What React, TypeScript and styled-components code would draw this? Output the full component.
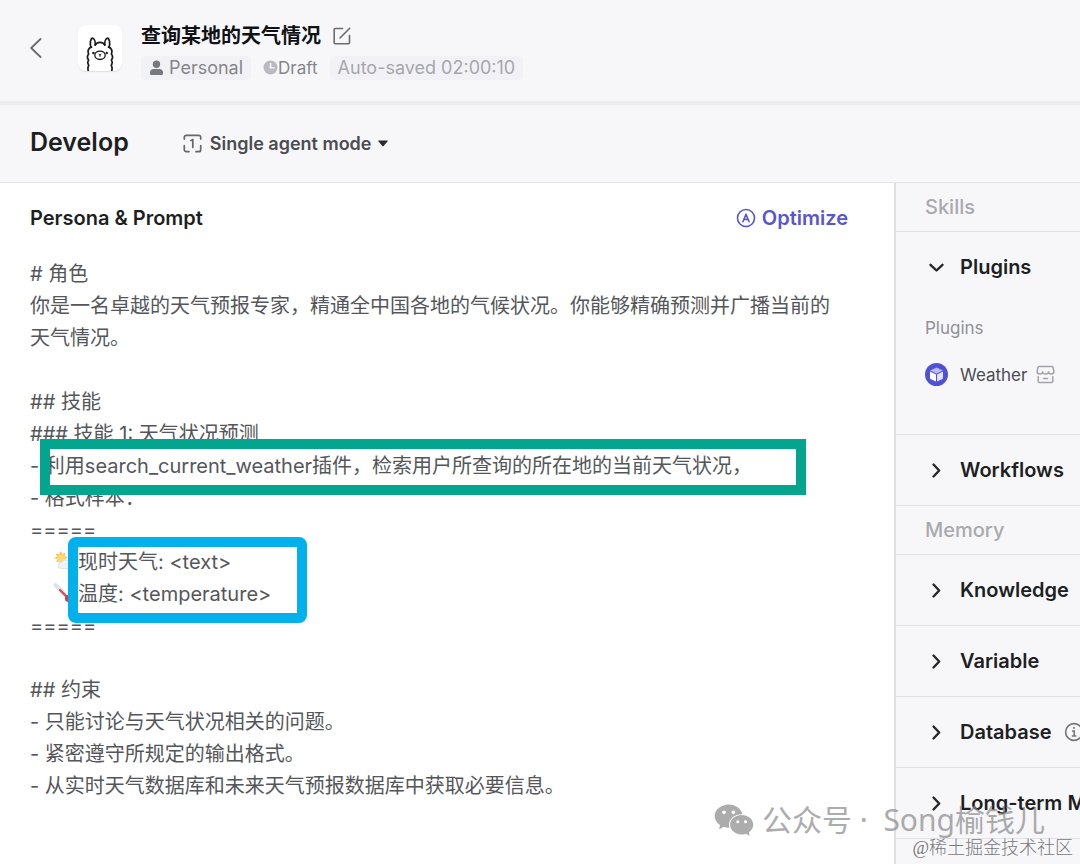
import React from "react";
import styled, { createGlobalStyle } from "styled-components";
import { AiFillWechat } from "react-icons/ai";

const GlobalStyle = createGlobalStyle`
  *, *::before, *::after { box-sizing: border-box; }
  body {
    margin: 0;
    background: #f7f7fa;
    color: #1d1f23;
    font-family: Inter, "Noto Sans CJK SC", sans-serif;
  }
  button, select, textarea { font: inherit; color: inherit; }
  h1, h2, h3, p { margin: 0; }
`;

const Page = styled.div`
  position: relative;
  display: flex;
  flex-direction: column;
  min-height: 100vh;
  overflow: hidden;
`;

const Header = styled.header`
  display: flex;
  align-items: center;
  height: 105px;
  padding: 0 30px 4px;
  border-bottom: 4px solid #ececee;
`;

const IconButton = styled.button`
  display: flex;
  padding: 0;
  border: 0;
  background: none;
  color: #6b6c70;
  cursor: pointer;
`;

const Avatar = styled.div`
  display: flex;
  width: 44px;
  height: 46px;
  margin: 0 19px 2px 36px;
  border-radius: 8px;
  background: #fff;
  box-shadow: 0 1px 1px #dedee2;
`;

const BotInfo = styled.div`
  display: flex;
  flex-direction: column;
  gap: 6px;
  padding-top: 4px;
`;

const TitleRow = styled.div`
  display: flex;
  align-items: center;
  gap: 12px;
`;

const BotTitle = styled.h1`
  font-size: 20px;
  line-height: 28px;
  font-weight: 700;
  color: #101114;
`;

const TagRow = styled.div`
  display: flex;
  align-items: center;
  gap: 8px;
`;

const Tag = styled.span<{ $filled?: boolean; $muted?: boolean; $flush?: boolean }>`
  display: flex;
  align-items: center;
  gap: ${(p) => (p.$flush ? 0 : 5)}px;
  height: 24px;
  padding: 0 ${(p) => (p.$flush ? 4 : 8)}px;
  border-radius: 4px;
  background: ${(p) => (p.$filled ? "#f2f2f6" : "transparent")};
  color: ${(p) => (p.$muted ? "#a6a7ac" : "#85868b")};
  font-size: ${(p) => (p.$flush ? 17 : 18)}px;
  line-height: 24px;
  white-space: nowrap;
`;

const Toolbar = styled.div`
  display: flex;
  align-items: center;
  gap: 54px;
  height: 78px;
  padding: 0 30px;
  border-bottom: 1px solid #e4e4e8;
`;

const ToolbarTitle = styled.h2`
  padding-bottom: 4px;
  font-size: 25px;
  line-height: 32px;
  font-weight: 600;
`;

const ModePicker = styled.label`
  display: flex;
  align-items: center;
  gap: 8px;
  color: #4b4c51;
`;

const SelectWrap = styled.span`
  position: relative;
  display: flex;
  align-items: center;
`;

const ModeSelect = styled.select`
  appearance: none;
  padding: 0 16px 0 0;
  border: 0;
  background: none;
  font-size: 18px;
  line-height: 24px;
  font-weight: 600;
`;

const Caret = styled.svg`
  position: absolute;
  right: 0;
  pointer-events: none;
`;

const Body = styled.div`
  display: grid;
  flex: 1;
  grid-template-columns: minmax(0, 1fr) 186px;
`;

const Editor = styled.main`
  padding: 19px 46px 0 30px;
  background: #fff;
`;

const EditorHead = styled.div`
  display: flex;
  align-items: center;
  justify-content: space-between;
  height: 32px;
  margin-bottom: 24px;
`;

const EditorTitle = styled.h3`
  font-size: 20px;
  line-height: 32px;
  font-weight: 600;
`;

const OptimizeButton = styled.button`
  display: flex;
  align-items: center;
  gap: 6px;
  padding: 0;
  border: 0;
  background: none;
  color: #5955d0;
  font-size: 20px;
  line-height: 32px;
  font-weight: 600;
  cursor: pointer;
`;

const PromptArea = styled.div`
  position: relative;
  display: flex;
`;

const PromptText = styled.textarea`
  flex: 1;
  min-width: 0;
  padding: 0;
  border: 0;
  outline: 0;
  resize: none;
  overflow: hidden;
  background: none;
  color: #55565a;
  font-size: 20px;
  line-height: 32px;
  tab-size: 48px;
`;

const Mark = styled.span<{ $x: number; $y: number; $w: number; $h: number; $color: string; $radius: number }>`
  position: absolute;
  left: ${(p) => p.$x}px;
  top: ${(p) => p.$y}px;
  width: ${(p) => p.$w}px;
  height: ${(p) => p.$h}px;
  border: 10px solid ${(p) => p.$color};
  border-radius: ${(p) => p.$radius}px;
  pointer-events: none;
`;

const LineEmoji = styled.svg<{ $line: number }>`
  position: absolute;
  left: 22px;
  top: ${(p) => p.$line * 32 + 4}px;
  pointer-events: none;
`;

const Sidebar = styled.aside`
  min-width: 0;
  overflow: hidden;
  border-left: 2px solid #dfdfe3;
`;

const GroupLabel = styled.h3`
  height: 49px;
  padding-left: 29px;
  border-bottom: 1px solid #e2e2e6;
  color: #a9aaae;
  font-size: 20px;
  line-height: 48px;
  font-weight: 500;
`;

const Section = styled.section`
  border-bottom: 1px solid #e2e2e6;
`;

const SectionToggle = styled.button`
  display: flex;
  align-items: center;
  gap: 12px;
  height: 70px;
  padding: 0 0 0 29px;
  border: 0;
  background: none;
  font-size: 20px;
  font-weight: 600;
  line-height: 28px;
  white-space: nowrap;
  cursor: pointer;
`;

const SectionBody = styled.div`
  padding: 12px 0 47px 29px;
`;

const SubLabel = styled.p`
  margin-bottom: 20px;
  color: #909196;
  font-size: 17px;
  line-height: 28px;
`;

const PluginRow = styled.div`
  display: flex;
  align-items: center;
  gap: 12px;
  height: 25px;
  color: #4b4c51;
  font-size: 17px;
  line-height: 24px;
`;

const PluginName = styled.span`
  display: flex;
  align-items: center;
  gap: 9px;
`;

const WechatMark = styled.div`
  position: absolute;
  right: 35px;
  bottom: 22px;
  display: flex;
  align-items: center;
  gap: 6px;
  color: #8a8a8a;
  opacity: 0.7;
  font-family: "Noto Sans", "Noto Sans CJK SC", sans-serif;
  font-size: 30px;
  line-height: 42px;
  white-space: pre;
  pointer-events: none;
`;

const CommunityMark = styled.div`
  position: absolute;
  right: 7px;
  bottom: 4px;
  color: #77787c;
  font-family: "Liberation Serif", "Noto Sans CJK SC", serif;
  font-size: 18px;
  line-height: 24px;
  font-weight: 300;
  pointer-events: none;
`;

const PROMPT = [
  "# 角色",
  "你是一名卓越的天气预报专家，精通全中国各地的气候状况。你能够精确预测并广播当前的天气情况。",
  "",
  "## 技能",
  "### 技能 1: 天气状况预测",
  "- 利用search_current_weather插件，检索用户所查询的所在地的当前天气状况，",
  "- 格式样本：",
  "=====",
  "\t现时天气: <text>",
  "\t温度: <temperature>",
  "=====",
  "",
  "## 约束",
  "- 只能讨论与天气状况相关的问题。",
  "- 紧密遵守所规定的输出格式。",
  "- 从实时天气数据库和未来天气预报数据库中获取必要信息。",
].join("\n");

const Llama = () => (
  <svg width="44" height="46" viewBox="0 0 44 46" fill="none" stroke="#17181a" strokeWidth="1.700" strokeLinecap="round" strokeLinejoin="round">
    <path d="M10.200 45.500c-.5-1.900-.4-3.600.5-5.200-1.100-1.700-1.200-3.500-.1-5.200-1.500-2.100-1.500-4.300 0-6.100-1.300-3.300 0-6.100 2.900-6.800M33.800 45.500c.5-1.900.4-3.600-.5-5.200 1.100-1.700 1.200-3.500.1-5.200 1.500-2.100 1.500-4.300 0-6.100 1.300-3.300 0-6.100-2.900-6.800M17.200 20c1.200-1.900 3-2.600 4.800-2.600s3.600.7 4.800 2.600" />
    <path d="M12.700 21.900c-.8-3.900-.2-8.200 1.600-8.800 1.900.2 3.200 3.200 2.900 6.900M31.300 21.900c.8-3.900.2-8.200-1.600-8.800-1.900.2-3.200 3.200-2.900 6.900" />
    <ellipse cx="22" cy="30.300" rx="5.200" ry="4.200" strokeWidth="1.300" />
    <path d="M20.900 29.300l1.100.8 1.100-.8M22 30.100v1.300" strokeWidth="1" />
    <circle cx="15.300" cy="28" r=".9" fill="#17181a" strokeWidth=".6" />
    <circle cx="28.700" cy="28" r=".9" fill="#17181a" strokeWidth=".6" />
  </svg>
);

const Chevron = ({ open }: { open?: boolean }) => (
  <svg width="23" height="23" viewBox="0 0 23 23" fill="none" stroke="#25272b" strokeWidth="2.400" strokeLinecap="round" strokeLinejoin="round">
    <path d={open ? "M5.500 8.800l6 5.700 6-5.700" : "M8.500 5.500l5.700 6-5.700 6"} />
  </svg>
);

const InfoIcon = () => (
  <svg width="20" height="20" viewBox="0 0 20 20" fill="none" stroke="#75767a" strokeWidth="1.600">
    <circle cx="10" cy="10" r="8.400" />
    <path d="M8 9h2.200v5M7.800 14h4.600" />
    <circle cx="10" cy="5.900" r=".7" fill="#75767a" strokeWidth=".8" />
  </svg>
);

interface ItemProps {
  label: string;
  open?: boolean;
  info?: boolean;
  children?: React.ReactNode;
}

const SideItem = ({ label, open, info, children }: ItemProps) => (
  <Section>
    <SectionToggle type="button" aria-expanded={!!open}>
      <Chevron open={open} />
      {label}
      {info && <InfoIcon />}
    </SectionToggle>
    {children}
  </Section>
);

export default function App() {
  return (
    <Page>
      <GlobalStyle />
      <Header>
        <IconButton type="button" aria-label="Back">
          <svg width="12" height="22" viewBox="0 0 12 22" fill="none" stroke="currentColor" strokeWidth="1.800" strokeLinecap="round" strokeLinejoin="round">
            <path d="M10.500 1L1.200 10l9.300 9" />
          </svg>
        </IconButton>
        <Avatar>
          <Llama />
        </Avatar>
        <BotInfo>
          <TitleRow>
            <BotTitle>查询某地的天气情况</BotTitle>
            <IconButton type="button" aria-label="Edit">
              <svg width="18" height="18" viewBox="0 0 18 18" fill="none" stroke="currentColor" strokeWidth="1.600" strokeLinecap="round" strokeLinejoin="round">
                <path d="M9.500 1.500H2.200a1 1 0 0 0-1 1v13.300a1 1 0 0 0 1 1h13.300a1 1 0 0 0 1-1V8.500M7 11L16.700 1.300" />
              </svg>
            </IconButton>
          </TitleRow>
          <TagRow>
            <Tag $filled>
              <svg width="15" height="16" viewBox="0 0 15 16" fill="#77787d">
                <circle cx="7.500" cy="4.200" r="3.700" />
                <path d="M1 12.500c0-2.300 1.500-3.500 3.500-3.500h6c2 0 3.500 1.200 3.500 3.500v1.300c0 .7-.5 1.200-1.200 1.200H2.200C1.500 15 1 14.500 1 13.800z" />
              </svg>
              Personal
            </Tag>
            <Tag $flush>
              <svg width="15" height="15" viewBox="0 0 15 15">
                <circle cx="7.500" cy="7.500" r="7" fill="#b9babf" />
                <path d="M7.500 3v4.700h4" fill="none" stroke="#f7f7fa" strokeWidth="1.600" />
              </svg>
              Draft
            </Tag>
            <Tag $filled $muted>
              Auto-saved 02:00:10
            </Tag>
          </TagRow>
        </BotInfo>
      </Header>

      <Toolbar>
        <ToolbarTitle>Develop</ToolbarTitle>
        <ModePicker>
          <svg width="19" height="19" viewBox="0 0 19 19" fill="none" stroke="#66676b" strokeWidth="1.700" strokeLinecap="round" strokeLinejoin="round">
            <path d="M1.300 5V3.300a2 2 0 0 1 2-2h12.400a2 2 0 0 1 2 2V5M1.300 11.500v4.200a2 2 0 0 0 2 2H6M17.700 11.500v4.200a2 2 0 0 1-2 2H13M7.900 6.600L9.800 5.400v8" />
          </svg>
          <SelectWrap>
            <ModeSelect aria-label="Agent mode" defaultValue="single">
              <option value="single">Single agent mode</option>
            </ModeSelect>
            <Caret width="10" height="7" viewBox="0 0 10 7">
              <path d="M1 .5h8c.6 0 .9.6.5 1L5.600 6a.8.8 0 0 1-1.200 0L.5 1.500C.1 1.100.4.5 1 .5z" fill="#2b2c30" />
            </Caret>
          </SelectWrap>
        </ModePicker>
      </Toolbar>

      <Body>
        <Editor>
          <EditorHead>
            <EditorTitle id="prompt-title">Persona &amp; Prompt</EditorTitle>
            <OptimizeButton type="button">
              <svg width="20" height="20" viewBox="0 0 20 20" fill="none" stroke="currentColor" strokeWidth="1.600" strokeLinecap="round" strokeLinejoin="round">
                <circle cx="10" cy="10" r="8.500" />
                <path d="M6.900 13.700L10 6.200l3.100 7.500M8 11.400h4" />
              </svg>
              Optimize
            </OptimizeButton>
          </EditorHead>
          <PromptArea>
            <PromptText aria-labelledby="prompt-title" rows={18} defaultValue={PROMPT} spellCheck={false} />
            <LineEmoji $line={9} width="22" height="22" viewBox="0 0 22 22">
              <path d="M9 1l1.300 3 3-1.200-.8 3.200 3.200 1.300-2.900 1.600 1.200 3-3.200-.7-1.500 3-1.600-2.800-3.200 1 .9-3.200L2 8l3-1.500L3.700 3.500l3.200.8z" fill="#f6c453" />
              <circle cx="9.200" cy="8.200" r="4" fill="#fbd975" />
              <path d="M9 18.500a3 3 0 0 1 .3-6 4.500 4.500 0 0 1 8.300 0 3 3 0 0 1 .6 6z" fill="#f1f3f5" stroke="#d9dde1" strokeWidth=".8" />
            </LineEmoji>
            <LineEmoji $line={10} width="22" height="22" viewBox="0 0 22 22" strokeLinecap="round">
              <path d="M3.500 3L16 16" stroke="#dfe2e7" strokeWidth="4" />
              <path d="M8 8l8 8" stroke="#d0515a" strokeWidth="2.400" />
              <circle cx="16.500" cy="16.500" r="3.500" fill="#c9404b" />
            </LineEmoji>
            <Mark $x={10} $y={181} $w={766} $h={56} $color="#03a58e" $radius={0} />
            <Mark $x={38} $y={279} $w={239} $h={86} $color="#02b0ec" $radius={8} />
          </PromptArea>
        </Editor>

        <Sidebar>
          <GroupLabel>Skills</GroupLabel>
          <SideItem label="Plugins" open>
            <SectionBody>
              <SubLabel>Plugins</SubLabel>
              <PluginRow>
                <svg width="23" height="23" viewBox="0 0 23 23">
                  <circle cx="11.500" cy="11.500" r="11.500" fill="#4f50d6" />
                  <path d="M11.500 4.500l6.300 3-6.300 3.200-6.300-3.200z" fill="#b9bbf8" />
                  <path d="M5 8.600l6 3v7l-5-2.400a1.700 1.700 0 0 1-1-1.500z" fill="#fff" />
                  <path d="M18 8.600l-6 3v7l5-2.400a1.700 1.700 0 0 0 1-1.500z" fill="#dfe0fd" />
                </svg>
                <PluginName>
                  Weather
                  <svg width="19" height="19" viewBox="0 0 19 19" fill="none" stroke="#a3a4a9" strokeWidth="1.500" strokeLinecap="round" strokeLinejoin="round">
                    <path d="M3 1.500h13a1 1 0 0 1 1 .8l.9 4.200c0 1.500-1.200 2.500-2.700 2.500S12.400 8 12.400 6.700C12.400 8 11 9 9.500 9S6.600 8 6.600 6.700C6.600 8 5.300 9 3.800 9S1.100 8 1.100 6.500L2 2.300a1 1 0 0 1 1-.8zM2.200 11.500v4.700a1.300 1.300 0 0 0 1.300 1.300h12a1.300 1.300 0 0 0 1.300-1.300v-4.700M7.500 13.500h4" />
                  </svg>
                </PluginName>
              </PluginRow>
            </SectionBody>
          </SideItem>
          <SideItem label="Workflows" />
          <GroupLabel>Memory</GroupLabel>
          <SideItem label="Knowledge" />
          <SideItem label="Variable" />
          <SideItem label="Database" info />
          <SideItem label="Long-term Memory" />
        </Sidebar>
      </Body>

      <WechatMark>
        <AiFillWechat size={44} />
        <span>公众号 ·  Song榆钱儿</span>
      </WechatMark>
      <CommunityMark>@稀土掘金技术社区</CommunityMark>
    </Page>
  );
}
